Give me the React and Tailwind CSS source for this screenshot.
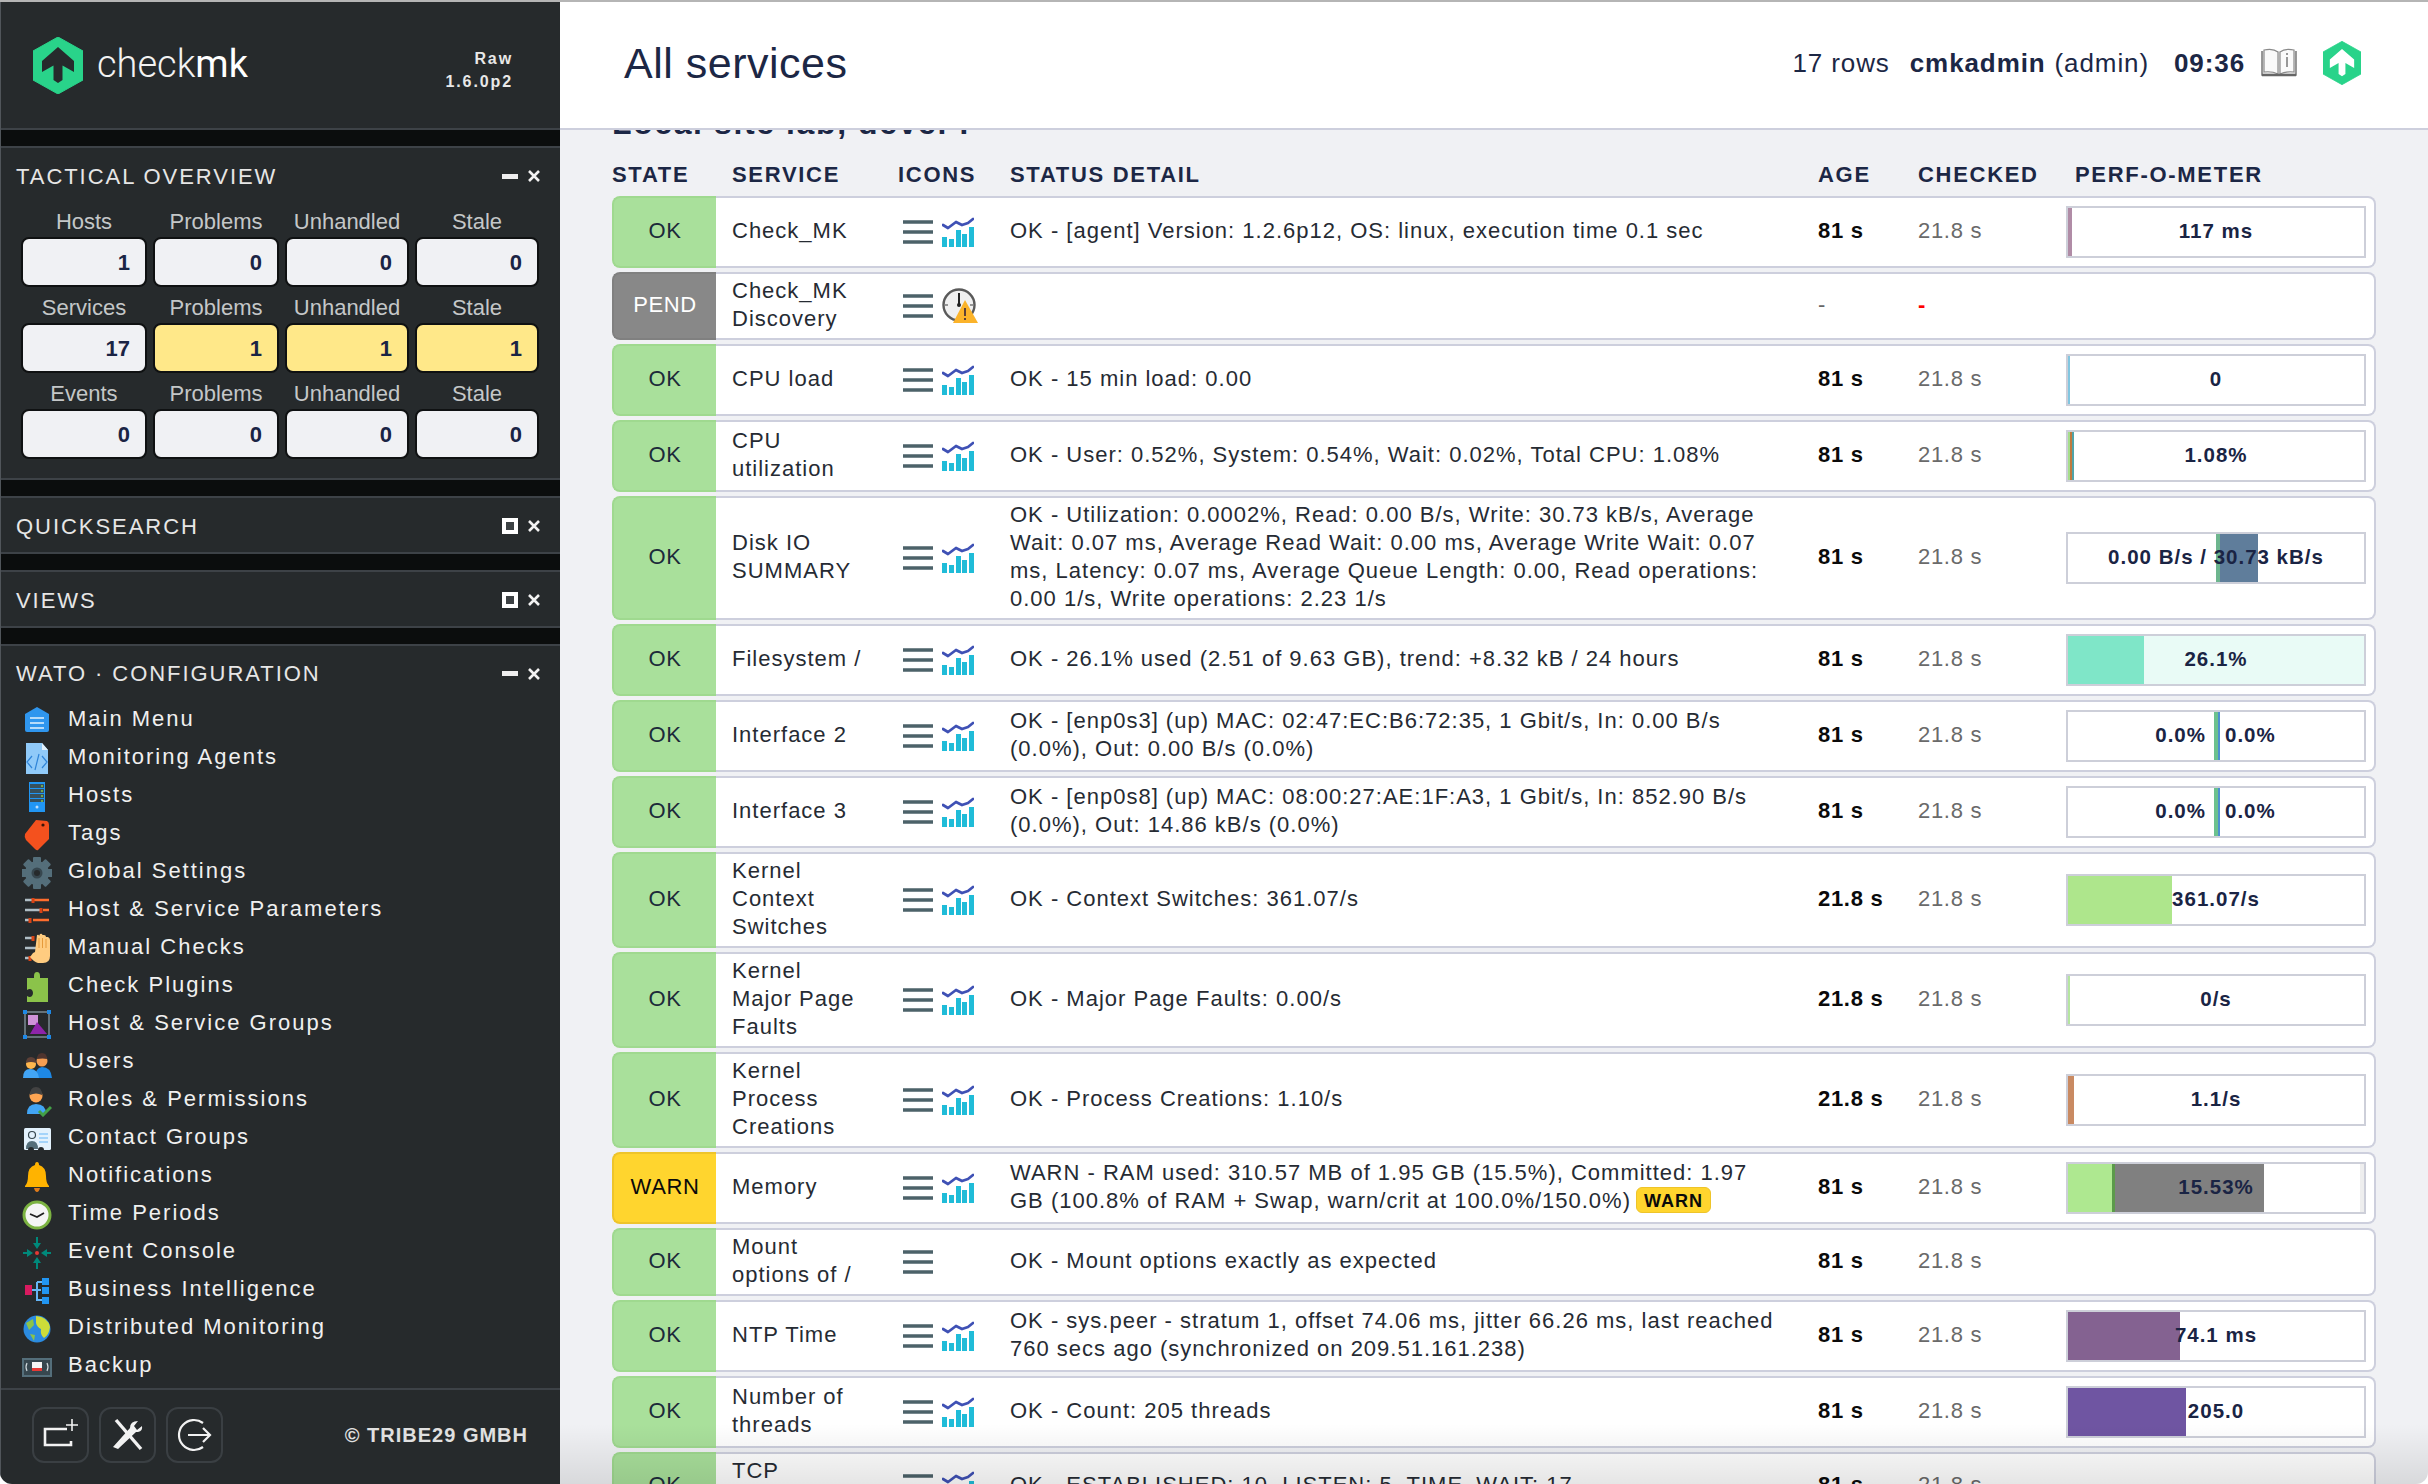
import React from "react";

const sans = "font-['Liberation_Sans',Arial,sans-serif]";

function HexLogo({ className, arrow }) {
  return (
    <svg className={className} viewBox="0 0 50 57">
      <path d="M25 0 L50 14 V43 L25 57 L0 43 V14 Z" fill="#29d38a" stroke="#29d38a" strokeWidth="1" strokeLinejoin="round" />
      <path d="M25 10 L41 24 V35 L29.5 28.5 V43 L25 46 L20.5 43 V28.5 L9 35 V24 Z" fill={arrow} />
    </svg>
  );
}

function MinIcon() {
  return <div className="w-4 h-[5px] bg-[#eeeeee]" />;
}

function BoxIcon() {
  return (
    <div className="w-4 h-4 bg-white flex items-center justify-center">
      <div className="w-2 h-2 bg-[#3c4144]" />
    </div>
  );
}

function CloseIcon() {
  return (
    <svg className="w-[14px] h-[14px]" viewBox="0 0 14 14">
      <path d="M2 2 L12 12 M12 2 L2 12" stroke="#f2f2f2" strokeWidth="2.6" />
    </svg>
  );
}

function PanelHead({ title, open, className }) {
  return (
    <div className={`flex items-center justify-between pl-[15px] pr-[19px] ${className}`}>
      <span className="text-[22px] tracking-[1.95px] text-[#e6e6e6] whitespace-pre">{title}</span>
      <div className="flex items-center gap-[9px]">
        {open ? <MinIcon /> : <BoxIcon />}
        <CloseIcon />
      </div>
    </div>
  );
}

function Strip() {
  return <div className="h-4 bg-[#0b0d0d]" />;
}

const tactical = [
  [["Hosts", 1], ["Problems", 0], ["Unhandled", 0], ["Stale", 0]],
  [["Services", 17], ["Problems", 1], ["Unhandled", 1], ["Stale", 1]],
  [["Events", 0], ["Problems", 0], ["Unhandled", 0], ["Stale", 0]],
];

function Tactical() {
  return (
    <div className="grid grid-cols-[126px_126px_124px_124px] gap-x-[6px] gap-y-[7px] pl-[20px] pb-[19px] pt-1">
      {tactical.flat().map(([label, value], i) => (
        <div key={i}>
          <div className="h-7 leading-7 text-center text-[22px] text-[#c4c7c8]">{label}</div>
          <div
            className={`mt-px h-[50px] border-2 border-[#0f1112] rounded-lg flex items-center justify-end pr-[15px] text-[22px] font-bold text-[#1a2444] ${
              i >= 5 && i <= 7 ? "bg-[#ffe889]" : "bg-[#f0f1f4]"
            }`}
          >
            {value}
          </div>
        </div>
      ))}
    </div>
  );
}

const Ico = ({ children }) => (
  <svg className="w-[30px] h-[32px] shrink-0 mt-[6px]" viewBox="0 0 30 32">
    {children}
  </svg>
);

const wato = [
  ["Main Menu", <Ico><path d="M15 2 L27 9 V25 Q27 27 25 27 H5 Q3 27 3 25 V9 Z" fill="#2f96ee" /><path d="M8 13 H22 M8 18 H22 M8 23 H22" stroke="#e3f2fd" strokeWidth="1.4" /></Ico>],
  ["Monitoring Agents", <Ico><path d="M4 0 H20 L26 7 V31 H4 Z" fill="#90caf9" /><path d="M20 0 V7 H26 Z" fill="#e3f2fd" /><path d="M10 13 L5 19 L10 25 M20 13 L25 19 L20 25 M17 11 L13 27" stroke="#2f84d8" strokeWidth="1.2" fill="none" /></Ico>],
  ["Hosts", <Ico><rect x="7" y="1" width="16" height="30" fill="#2196f3" /><path d="M8 3 H22 V7 H8 Z M8 8 H22 V12 H8 Z M8 13 H22 V17 H8 Z M8 18 H22 V21 H8 Z" fill="#37505c" /><path d="M19 5 h2 M19 10 h2 M19 15 h2 M19 20 h2" stroke="#8bc34a" strokeWidth="1.5" /><circle cx="15" cy="26" r="1.5" fill="#bbdefb" /></Ico>],
  ["Tags", <Ico><path d="M14 1 L25 2 Q27 3 27 6 V20 L16 31 Q15 32 13 30 L4 21 Q2 18 3 15 Z" fill="#f4511e" /><circle cx="21" cy="6" r="1.6" fill="#3a1408" /></Ico>],
  ["Global Settings", <Ico><g fill="#546e7a">{[0, 45, 90, 135].map((r) => <rect key={r} x="11" y="0" width="8" height="32" rx="1" transform={`rotate(${r} 15 16)`} />)}<circle cx="15" cy="16" r="12" /></g><circle cx="15" cy="16" r="5.5" fill="#37474f" /><circle cx="15" cy="16" r="3" fill="#262a2c" /></Ico>],
  ["Host & Service Parameters", <Ico><path d="M3 5 H10 M3 15 H18 M3 25 H8" stroke="#b0bec5" strokeWidth="2.5" /><path d="M12 5 H27 M21 15 H27 M11 25 H27" stroke="#ff6d2d" strokeWidth="2.5" /><path d="M11 3 v5 M19 13 v5 M8 23 v5" stroke="#d84315" strokeWidth="3" /></Ico>],
  ["Manual Checks", <Ico><path d="M3 5 H10 M3 15 H18 M3 25 H8" stroke="#b0bec5" strokeWidth="2.5" /><path d="M11 3 v5 M8 23 v5" stroke="#d84315" strokeWidth="3" /><path d="M15 2 Q17 1 17 3 L18 1 Q20 0 20.5 2 L22 2 Q24 2 24 4 L26 4 Q28 5 28 7 V23 Q28 30 21 30 H16 Q12 29 8 24 L11 20 L13 19 Z" fill="#ffcc80" /><path d="M17 5 V15 M20.5 5 V15 M24 6 V15" stroke="#e69a3a" strokeWidth="1" /></Ico>],
  ["Check Plugins", <Ico><path d="M12 5 Q12 1 15 1 Q18 1 18 5 V7 H26 V31 H5 V25 Q8 27 10 25 Q12 22 10 19 Q8 17 5 19 V7 H12 Z" fill="#8bc34a" /></Ico>],
  ["Host & Service Groups", <Ico><rect x="3" y="3" width="24" height="25" fill="none" stroke="#90a4ae" strokeWidth="1.2" /><rect x="6" y="6" width="10" height="10" fill="#ce93d8" /><path d="M15 13 L25 25 H8 Z" fill="#8e24aa" /><g fill="#1e88e5"><rect x="1" y="1" width="4" height="4" /><rect x="25" y="1" width="4" height="4" /><rect x="1" y="26" width="4" height="4" /><rect x="25" y="26" width="4" height="4" /></g></Ico>],
  ["Users", <Ico><path d="M13 31 Q13 21 20 20 Q29 20 30 31 Z" fill="#1e88e5" /><circle cx="20" cy="14" r="5.5" fill="#f59e52" /><path d="M15 12 Q15 6 20 6 Q25 6 25 12 Q21 11 15 12 Z" fill="#4e342e" /><path d="M1 31 Q1 22 8 22 Q16 22 17 31 Z" fill="#42a5f5" /><circle cx="9" cy="17" r="5" fill="#ffb74d" /><path d="M4 16 Q4 10 9 10 Q14 10 14 16 Q9 14 4 16 Z" fill="#5d4037" /></Ico>],
  ["Roles & Permissions", <Ico><path d="M5 29 Q5 19 14 19 Q24 19 24 29 Z" fill="#42a5f5" /><circle cx="14" cy="11" r="6.5" fill="#ffa552" /><path d="M8 10 Q8 2 14 2 Q20 2 20 10 Q14 7 8 10 Z" fill="#424242" /><path d="M17 26 L21 30 L29 22" stroke="#43a047" strokeWidth="3" fill="none" /></Ico>],
  ["Contact Groups", <Ico><rect x="2" y="5" width="27" height="22" rx="1.5" fill="#e3f2fd" /><path d="M17 11 H26 M17 15 H26 M17 19 H26" stroke="#90caf9" strokeWidth="1.5" /><circle cx="10" cy="12" r="3.5" fill="none" stroke="#37474f" strokeWidth="1.2" /><path d="M4 26 Q4 18 10 18 Q16 18 16 26 Z" fill="#546e7a" /><path d="M6 27 a3 3 0 0 1 6 0 M16 27 a3 3 0 0 1 6 0" fill="#262a2c" /></Ico>],
  ["Notifications", <Ico><path d="M15 1 Q17 1 17 4 Q24 6 24 15 Q24 22 27 25 V26 H3 V25 Q6 22 6 15 Q6 6 13 4 Q13 1 15 1 Z" fill="#ffb300" /><path d="M12 27 H18 Q17 31 15 31 Q13 31 12 27 Z" fill="#e07b1a" /></Ico>],
  ["Time Periods", <Ico><circle cx="15" cy="16" r="13" fill="#f5f5f5" stroke="#7cb342" strokeWidth="3" /><path d="M8 15 L15 18 L22 14" stroke="#212121" strokeWidth="1.8" fill="none" /></Ico>],
  ["Event Console", <Ico><path d="M15 0 V7 M1 16 H7 M23 16 H29 M15 25 V32" stroke="#00897b" strokeWidth="2" /><path d="M11 6 H19 L15 12 Z M11 26 H19 L15 20 Z M5 12 V20 L11 16 Z M25 12 V20 L19 16 Z" fill="#00897b" /><circle cx="15" cy="16" r="2" fill="#e53935" /></Ico>],
  ["Business Intelligence", <Ico><rect x="3" y="10" width="7" height="10" fill="#d81b60" /><path d="M10 15 H19 M15 7 V25 H20 M15 7 H20" stroke="#64b5f6" strokeWidth="2" fill="none" /><g fill="#2196f3"><rect x="20" y="3" width="7" height="7" /><rect x="20" y="12" width="7" height="7" /><rect x="20" y="22" width="7" height="7" /></g></Ico>],
  ["Distributed Monitoring", <Ico><circle cx="15" cy="16" r="13.5" fill="#2b8be0" /><path d="M14 3 Q26 4 28 14 Q27 22 22 25 Q18 22 19 16 Q15 14 14 10 Z" fill="#cddc39" /><path d="M4 10 L11 6 L12 12 L7 17 Z M8 21 L13 22 L12 28 Z" fill="#8bc34a" /></Ico>],
  ["Backup", <Ico><rect x="0" y="7" width="30" height="19" fill="#546e7a" /><rect x="2" y="9" width="26" height="15" fill="#37474f" /><rect x="10" y="11" width="10" height="9" fill="#f5f5f5" /><rect x="10" y="17" width="10" height="3" fill="#e53935" /><path d="M5 12 Q3 16 5 20 M25 12 Q27 16 25 20" stroke="#cfd8dc" strokeWidth="1.2" fill="none" /></Ico>],
];

function Sidebar() {
  return (
    <aside className="w-[560px] shrink-0 bg-[#262a2c] border-l border-[#50555a] flex flex-col h-full text-white">
      <div className="h-[128px] border-b-2 border-[#3d4247] flex justify-between pl-[32px] pr-[47px] items-center">
        <div className="flex items-center gap-[14px]">
          <HexLogo className="w-[50px] h-[57px]" arrow="#262a2c" />
          <div className="font-['Roboto',sans-serif] text-[38px] leading-none text-[#f2f2f2] font-light -mt-[2px]">
            check<span className="font-normal text-white">mk</span>
          </div>
        </div>
        <div className="text-right font-bold text-[16px] tracking-[1.9px] leading-[23px] text-[#e8e8e8] mt-[9px]">
          <div>Raw</div>
          <div>1.6.0p2</div>
        </div>
      </div>
      <Strip />
      <div className="border-y-2 border-[#3d4247]">
        <PanelHead title="TACTICAL OVERVIEW" open className="h-[56px]" />
        <Tactical />
      </div>
      <Strip />
      <div className="border-y-2 border-[#3d4247]">
        <PanelHead title="QUICKSEARCH" className="h-[54px] pt-[2px]" />
      </div>
      <Strip />
      <div className="border-y-2 border-[#3d4247]">
        <PanelHead title="VIEWS" className="h-[54px] pt-[2px]" />
      </div>
      <Strip />
      <div className="border-t-2 border-b-2 border-t-[#3d4247] border-b-[#3d4247] pb-[5px]">
        <PanelHead title="WATO · CONFIGURATION" open className="h-[53px] pt-[2px]" />
        {wato.map(([label, icon]) => (
          <div key={label} className="h-[38px] flex items-center pl-[21px] gap-[16px]">
            {icon}
            <span className="text-[22px] tracking-[2px] text-[#f0f0f0]">{label}</span>
          </div>
        ))}
      </div>
      <div className="flex-1 flex items-start justify-between pl-[31px] pr-[32px] pt-[17px]">
        <div className="flex gap-[10px]">
          <div className="w-[57px] h-[56px] border-2 border-[#3a3f43] rounded-xl flex items-center justify-center">
            <svg className="w-9 h-9" viewBox="0 0 36 36">
              <path d="M24 12 H2 V28 H28 V24" fill="none" stroke="#f2f2f2" strokeWidth="2.6" />
              <path d="M29 2 V14 M23 8 H35" stroke="#f2f2f2" strokeWidth="1.6" />
            </svg>
          </div>
          <div className="w-[57px] h-[56px] border-2 border-[#3a3f43] rounded-xl flex items-center justify-center">
            <svg className="w-9 h-9" viewBox="0 0 36 36">
              <path d="M6 3 L31 32" stroke="#f2f2f2" strokeWidth="3.4" />
              <path d="M28 4 L24 9 L27 13 L32 9 Q33 14 28 15 L26 15 L8 32 L3 30 L20 11 Q20 4 28 4 Z" fill="#f2f2f2" />
            </svg>
          </div>
          <div className="w-[57px] h-[56px] border-2 border-[#3a3f43] rounded-xl flex items-center justify-center">
            <svg className="w-10 h-10" viewBox="0 0 40 40">
              <path d="M28 8 A15 15 0 1 0 28 32" fill="none" stroke="#f2f2f2" strokeWidth="2.2" />
              <path d="M13 20 H35 M28 13 L35 20 L28 27" fill="none" stroke="#f2f2f2" strokeWidth="2.2" />
            </svg>
          </div>
        </div>
        <div className="font-bold text-[20px] tracking-[1px] text-[#e0e0e0] mt-[13px] whitespace-nowrap">© TRIBE29 GMBH</div>
      </div>
    </aside>
  );
}

function Hamburger() {
  return (
    <svg className="w-[30px] h-[26px] shrink-0" viewBox="0 0 30 26">
      <path d="M0 3 H30 M0 13 H30 M0 23 H30" stroke="#4c6269" strokeWidth="3.4" />
    </svg>
  );
}

function GraphIcon() {
  return (
    <svg className="w-[32px] h-[30px] shrink-0" viewBox="0 0 32 30">
      <path d="M0 20 H5 V30 H0 Z M7 22 H12 V30 H7 Z M14 13 H19 V30 H14 Z M20 17 H25 V30 H20 Z M27 10 H32 V30 H27 Z" fill="#20bcd8" />
      <path d="M1 8 L6 11 L14 5 L20 8 L26 6 L31 2" fill="none" stroke="#3f51b5" strokeWidth="2.8" strokeLinejoin="round" strokeLinecap="round" />
    </svg>
  );
}

function PendIcon() {
  return (
    <svg className="w-[36px] h-[36px] shrink-0" viewBox="0 0 36 36">
      <circle cx="17" cy="17" r="15.5" fill="#f0f0f0" stroke="#5a5a5a" strokeWidth="2.4" />
      <path d="M17 5 V17" stroke="#222" strokeWidth="2" />
      <circle cx="17" cy="17" r="2" fill="#222" />
      <path d="M3 17 H6 M28 17 H31" stroke="#777" strokeWidth="1.5" />
      <path d="M23 12 L36 35 H11 Z" fill="#fbb32a" />
      <path d="M23 20 V28 M23 30 V32" stroke="#5d4037" strokeWidth="2" />
    </svg>
  );
}

// seg = [width, colour] from the left edge of the perf box
const rows = [
  ["OK", "Check_MK", "g", "OK - [agent] Version: 1.2.6p12, OS: linux, execution time 0.1 sec", "81 s", { text: "117 ms", segs: [[4, "#b08ca6"]] }],
  ["PEND", "Check_MK Discovery", "p", "", "-", null],
  ["OK", "CPU load", "g", "OK - 15 min load: 0.00", "81 s", { text: "0", segs: [[2, "#82c6e0"]] }],
  ["OK", "CPU utilization", "g", "OK - User: 0.52%, System: 0.54%, Wait: 0.02%, Total CPU: 1.08%", "81 s", { text: "1.08%", segs: [[2, "#a6dd8c"], [2, "#c0793e"], [2, "#4fa3a8"]] }],
  ["OK", "Disk IO SUMMARY", "g", "OK - Utilization: 0.0002%, Read: 0.00 B/s, Write: 30.73 kB/s, Average Wait: 0.07 ms, Average Read Wait: 0.00 ms, Average Write Wait: 0.07 ms, Latency: 0.07 ms, Average Queue Length: 0.00, Read operations: 0.00 1/s, Write operations: 2.23 1/s", "81 s", { text: "0.00 B/s / 30.73 kB/s", segs: [[148, "transparent"], [4, "#6db58e"], [38, "#5f7d9b"]] }],
  ["OK", "Filesystem /", "g", "OK - 26.1% used (2.51 of 9.63 GB), trend: +8.32 kB / 24 hours", "81 s", { text: "26.1%", bg: "#e9fbf6", segs: [[76, "#7fe6c8"]] }],
  ["OK", "Interface 2", "g", "OK - [enp0s3] (up) MAC: 02:47:EC:B6:72:35, 1 Gbit/s, In: 0.00 B/s (0.0%), Out: 0.00 B/s (0.0%)", "81 s", { split: true, segs: [[146, "transparent"], [4, "#6cc18e"], [2, "#4d90d0"]] }],
  ["OK", "Interface 3", "g", "OK - [enp0s8] (up) MAC: 08:00:27:AE:1F:A3, 1 Gbit/s, In: 852.90 B/s (0.0%), Out: 14.86 kB/s (0.0%)", "81 s", { split: true, segs: [[146, "transparent"], [4, "#6cc18e"], [2, "#4d90d0"]] }],
  ["OK", "Kernel Context Switches", "g", "OK - Context Switches: 361.07/s", "21.8 s", { text: "361.07/s", segs: [[104, "#aee68c"]] }],
  ["OK", "Kernel Major Page Faults", "g", "OK - Major Page Faults: 0.00/s", "21.8 s", { text: "0/s", segs: [[2, "#b5e5a0"]] }],
  ["OK", "Kernel Process Creations", "g", "OK - Process Creations: 1.10/s", "21.8 s", { text: "1.1/s", segs: [[6, "#c98a62"]] }],
  ["WARN", "Memory", "g", "WARN - RAM used: 310.57 MB of 1.95 GB (15.5%), Committed: 1.97 GB (100.8% of RAM + Swap, warn/crit at 100.0%/150.0%)", "81 s", { text: "15.53%", segs: [[44, "#aee890"], [3, "#5b9a4a"], [149, "#808080"], [96, "transparent"], [4, "#eeeeee"]] }],
  ["OK", "Mount options of /", "", "OK - Mount options exactly as expected", "81 s", null],
  ["OK", "NTP Time", "g", "OK - sys.peer - stratum 1, offset 74.06 ms, jitter 66.26 ms, last reached 760 secs ago (synchronized on 209.51.161.238)", "81 s", { text: "74.1 ms", segs: [[112, "#846291"]] }],
  ["OK", "Number of threads", "g", "OK - Count: 205 threads", "81 s", { text: "205.0", segs: [[118, "#6f55a2"]] }],
  ["OK", "TCP Connections", "g", "OK - ESTABLISHED: 10, LISTEN: 5, TIME_WAIT: 17", "81 s", null],
];

const stateStyle = {
  OK: "bg-[#a9e09b] border-[#9fd98f] text-[#1c2a3a]",
  PEND: "bg-[#888888] border-[#808080] text-white",
  WARN: "bg-[#ffd52e] border-[#eec42a] text-[#0a0a0a]",
};

function Perf({ perf }) {
  return (
    <div className="relative w-[300px] h-[52px] my-1 border-2 border-[#cdcfd9] bg-white flex text-[20.5px] font-bold text-[#1a2444]">
      {perf.bg && <div className="absolute inset-0 bg-[#e9fbf6]" />}
      {perf.segs.map(([w, c], i) => (
        <div key={i} className="relative h-full" style={{ width: w, background: c }} />
      ))}
      {perf.split ? (
        <div className="absolute inset-0 flex items-center pb-[3px]">
          <div className="w-[138px] text-right">0.0%</div>
          <div className="pl-[19px]">0.0%</div>
        </div>
      ) : (
        <div className="absolute inset-0 flex items-center justify-center whitespace-nowrap pb-[3px]">{perf.text}</div>
      )}
    </div>
  );
}

function Row({ row }) {
  const [state, service, icon, detail, age, perf] = row;
  const warn = state === "WARN";
  return (
    <div className="flex mb-1">
      <div className={`w-[104px] shrink-0 rounded-l-lg border-y-2 border-l-2 flex items-center justify-center text-[22px] tracking-[0.6px] pb-[3px] ${stateStyle[state]}`}>
        {state}
      </div>
      <div className="flex-1 flex items-center bg-white border-y-2 border-r-2 border-[#cdcfdd] rounded-r-lg py-1 text-[22px] leading-7 tracking-[1px] text-[#262b33]">
        <div className="w-[187px] shrink-0 pl-4 pr-[39px] -translate-y-px">{service}</div>
        <div className="w-[107px] shrink-0 flex items-center gap-[9px]">
          <Hamburger />
          {icon === "g" && <GraphIcon />}
          {icon === "p" && <PendIcon />}
        </div>
        <div className="w-[808px] shrink-0 pr-[38px] min-h-14 flex items-center -translate-y-px">
          <div>
            {detail}
            {warn && (
              <span className="inline-block ml-[5px] px-[7px] h-[26px] leading-[26px] align-[1px] rounded-md bg-[#ffd52e] border border-[#eec42a] text-[#0a0a0a] text-[18px] font-bold">WARN</span>
            )}
          </div>
        </div>
        <div className={`w-[100px] shrink-0 -translate-y-px tracking-[0.7px] ${age === "-" ? "text-[#666]" : "font-bold text-[#0a0a0a]"}`}>{age}</div>
        <div className={`w-[148px] shrink-0 -translate-y-px tracking-[0.7px] ${age === "-" ? "font-bold text-[#ff0000]" : "text-[#6a6a6a]"}`}>{age === "-" ? "-" : "21.8 s"}</div>
        {perf && <Perf perf={perf} />}
      </div>
    </div>
  );
}

function Main() {
  return (
    <main className="relative flex-1 min-w-0 h-full flex flex-col bg-[#f0f1f4]">
      <header className="h-[128px] border-b-2 border-[#cdcfdd] bg-white shrink-0 z-10 flex items-center justify-between pl-[64px] pr-[67px]">
        <h1 className="text-[43px] text-[#1c2745] tracking-[0.5px] -mt-[3px]">All services</h1>
        <div className="flex items-center text-[#1c2745] text-[26px] tracking-[0.9px] -mt-[4px]">
          <span>17 rows</span>
          <span className="ml-[20px] font-bold">cmkadmin</span>
          <span className="ml-[9px]">(admin)</span>
          <span className="ml-[25px] font-bold">09:36</span>
          <svg className="ml-[16px] w-[36px] h-[30px]" viewBox="0 0 36 30">
            <path d="M1 3 V27 H35 V3" fill="#ececec" stroke="#777" strokeWidth="1.5" />
            <path d="M3 2 Q12 0 17 4 V26 Q11 23 3 24 Z M33 2 Q24 0 19 4 V26 Q25 23 33 24 Z" fill="#fafafa" stroke="#8a8a8a" strokeWidth="1.2" />
            <path d="M26 9 V19" stroke="#777" strokeWidth="1.5" />
            <path d="M26 5 V7" stroke="#777" strokeWidth="1.5" />
            <path d="M1 27 H35" stroke="#666" strokeWidth="2.5" />
          </svg>
          <HexLogo className="ml-[26px] w-[38px] h-[44px]" arrow="#ffffff" />
        </div>
      </header>
      <div className="flex-1 min-h-0 overflow-hidden px-[52px]">
        <div className="h-[28px] -mt-[21px] text-[32px] font-bold tracking-[1.6px] leading-[28px] text-[#1c2745] whitespace-pre">Local site lab, devel :</div>
        <div className="flex h-[59px] pt-[26px] text-[22px] font-bold tracking-[1.7px] leading-6 text-[#1c2745]">
          <div className="w-[120px]">STATE</div>
          <div className="w-[166px]">SERVICE</div>
          <div className="w-[112px]">ICONS</div>
          <div className="w-[808px]">STATUS DETAIL</div>
          <div className="w-[100px]">AGE</div>
          <div className="w-[157px]">CHECKED</div>
          <div className="whitespace-nowrap">PERF-O-METER</div>
        </div>
        {rows.map((row) => (
          <Row key={row[1]} row={row} />
        ))}
      </div>
      <div className="absolute left-0 right-0 bottom-0 h-[60px] bg-linear-to-b from-transparent to-black/10 pointer-events-none" />
    </main>
  );
}

export default function App() {
  return (
    <div className={`${sans} w-full h-screen bg-white overflow-hidden`}>
      <div className="h-[2px] bg-[#b5b5b5]" />
      <div className="flex h-[1482px] rounded-b-[12px] overflow-hidden">
        <Sidebar />
        <Main />
      </div>
    </div>
  );
}
